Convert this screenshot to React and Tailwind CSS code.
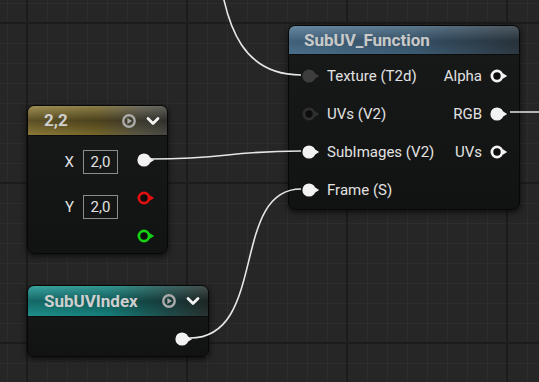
import React from 'react';

// pin glyph used on node inputs / outputs
function Pin({ kind = 'filled', color = '#f2f2f2' }) {
  return (
    <svg width="19" height="14" viewBox="0 0 19 14" className="shrink-0 block">
      {kind === 'filled' ? (
        <circle cx="7" cy="7" r="6.6" fill={color} />
      ) : (
        <circle cx="7" cy="7" r="5.1" fill="#0d0d0d" stroke={color} strokeWidth="2.8" />
      )}
      <path d="M12.8 4.2 L17.2 7 L12.8 9.8 Z" fill={color} />
    </svg>
  );
}

function HeaderIcons() {
  return (
    <div className="flex items-center gap-[10px]">
      <svg width="14" height="14" viewBox="0 0 14 14" className="block">
        <circle cx="7" cy="7" r="5.7" fill="none" stroke="#ababab" strokeWidth="2.4" />
        <path d="M5.4 3.9 L10 7 L5.4 10.1 Z" fill="#ababab" />
      </svg>
      <svg width="14" height="10" viewBox="0 0 14 10" className="block">
        <path d="M2 2.4 L7 7.4 L12 2.4" fill="none" stroke="#f4f4f4" strokeWidth="2.8" strokeLinecap="round" strokeLinejoin="round" />
      </svg>
    </div>
  );
}

const nodeBase =
  'absolute rounded-[7px] border border-[#070707] bg-[linear-gradient(to_bottom,#181919,#111212)] shadow-[0_2px_6px_rgba(0,0,0,0.7)] overflow-hidden';

function Label({ children, className = '' }) {
  return <span className={`text-[15px] leading-none text-[#e2e2e2] ${className}`}>{children}</span>;
}

export default function App() {
  return (
    <div
      className="relative w-[539px] h-[382px] overflow-hidden bg-[#262626]"
      style={{ fontFamily: 'Roboto, "Noto Sans", "Liberation Sans", sans-serif' }}
    >
      {/* grid */}
      <svg className="absolute inset-0" width="539" height="382">
        <defs>
          <pattern id="fine" width="20" height="20" patternUnits="userSpaceOnUse" x="7" y="3">
            <path d="M0 0.5 H20 M0.5 0 V20" stroke="#2d2d2d" strokeWidth="1" />
          </pattern>
          <pattern id="major" width="160" height="160" patternUnits="userSpaceOnUse" x="26" y="22">
            <path d="M0 1 H160 M1 0 V160" stroke="#1c1c1c" strokeWidth="2" />
          </pattern>
        </defs>
        <rect width="539" height="382" fill="url(#fine)" />
        <rect width="539" height="382" fill="url(#major)" />
      </svg>

      {/* SubUV_Function */}
      <div className={`${nodeBase} left-[288px] top-[25px] w-[232px] h-[185px]`}>
        <div className="h-[29px] flex items-center pl-[15px] bg-[linear-gradient(to_bottom,rgba(255,255,255,0.14),rgba(0,0,0,0.18)_55%,rgba(0,0,0,0.05)),linear-gradient(to_right,#4f7593,#3f6079_55%,#2f3b45)] border-b border-[#0c0c0c]">
          <span className="text-[17px] font-bold text-[#c9c9c9] leading-none">SubUV_Function</span>
        </div>
        <div className="pt-[2px] pl-[13px] pr-[10px]">
          <div className="h-[38px] flex items-center justify-between">
            <div className="flex items-center gap-[6px]">
              <Pin color="#3d3d3d" />
              <Label>Texture (T2d)</Label>
            </div>
            <div className="flex items-center gap-[8px]">
              <Label>Alpha</Label>
              <Pin kind="ring" />
            </div>
          </div>
          <div className="h-[38px] flex items-center justify-between">
            <div className="flex items-center gap-[6px]">
              <Pin kind="ring" color="#2f2f2f" />
              <Label>UVs (V2)</Label>
            </div>
            <div className="flex items-center gap-[8px]">
              <Label>RGB</Label>
              <Pin />
            </div>
          </div>
          <div className="h-[38px] flex items-center justify-between">
            <div className="flex items-center gap-[6px]">
              <Pin />
              <Label>SubImages (V2)</Label>
            </div>
            <div className="flex items-center gap-[8px]">
              <Label>UVs</Label>
              <Pin kind="ring" />
            </div>
          </div>
          <div className="h-[38px] flex items-center">
            <div className="flex items-center gap-[6px]">
              <Pin />
              <Label>Frame (S)</Label>
            </div>
          </div>
        </div>
      </div>

      {/* 2,2 constant */}
      <div className={`${nodeBase} left-[27px] top-[105px] w-[141px] h-[149px]`}>
        <div className="h-[30px] flex items-center justify-between pl-[16px] pr-[7px] bg-[linear-gradient(to_bottom,rgba(255,255,255,0.12),rgba(0,0,0,0.38)_50%,rgba(0,0,0,0.05)),linear-gradient(to_right,#93803c,#7a6a2c_50%,#5e5a48_80%,#4c4b45)] border-b border-[#0c0c0c]">
          <span className="text-[17px] font-bold text-[#cfcfcf] leading-none">2,2</span>
          <HeaderIcons />
        </div>
        <div className="flex">
          <div className="pl-[34px] pt-[14px] flex flex-col gap-[21px]">
            <div className="flex items-center gap-[9px]">
              <Label className="w-[12px] text-right">X</Label>
              <div className="w-[35px] h-[24px] border border-[#8c8c8c] flex items-center justify-center">
                <Label>2,0</Label>
              </div>
            </div>
            <div className="flex items-center gap-[9px]">
              <Label className="w-[12px] text-right">Y</Label>
              <div className="w-[35px] h-[24px] border border-[#8c8c8c] flex items-center justify-center">
                <Label>2,0</Label>
              </div>
            </div>
          </div>
          <div className="ml-[19px] pt-[17px] flex flex-col gap-[24px]">
            <Pin />
            <Pin kind="ring" color="#e01010" />
            <Pin kind="ring" color="#14d014" />
          </div>
        </div>
      </div>

      {/* SubUVIndex */}
      <div className={`${nodeBase} left-[27px] top-[285px] w-[182px] h-[72px]`}>
        <div className="h-[31px] flex items-center justify-between pl-[16px] pr-[8px] bg-[linear-gradient(to_bottom,rgba(255,255,255,0.12),rgba(0,0,0,0.32)_50%,rgba(0,0,0,0.05)),linear-gradient(to_right,#1f9894,#168580_45%,#1f5553_75%,#2a3534)] border-b border-[#0c0c0c]">
          <span className="text-[17px] font-bold text-[#cfcfcf] leading-none">SubUVIndex</span>
          <HeaderIcons />
        </div>
        <div className="flex justify-end pt-[15px] pr-[14px]">
          <Pin />
        </div>
      </div>

      {/* wires */}
      <svg className="absolute inset-0 pointer-events-none" width="539" height="382">
        <g fill="none" stroke="#e6e6e6" strokeWidth="1.6">
          <path d="M216 -60 C222 40, 250 75, 301 75" />
          <path d="M151 159 C230 159, 225 151, 301 151" />
          <path d="M190 338 C268 338, 230 189, 301 189" />
          <path d="M510 112 L545 112" />
        </g>
      </svg>
    </div>
  );
}
